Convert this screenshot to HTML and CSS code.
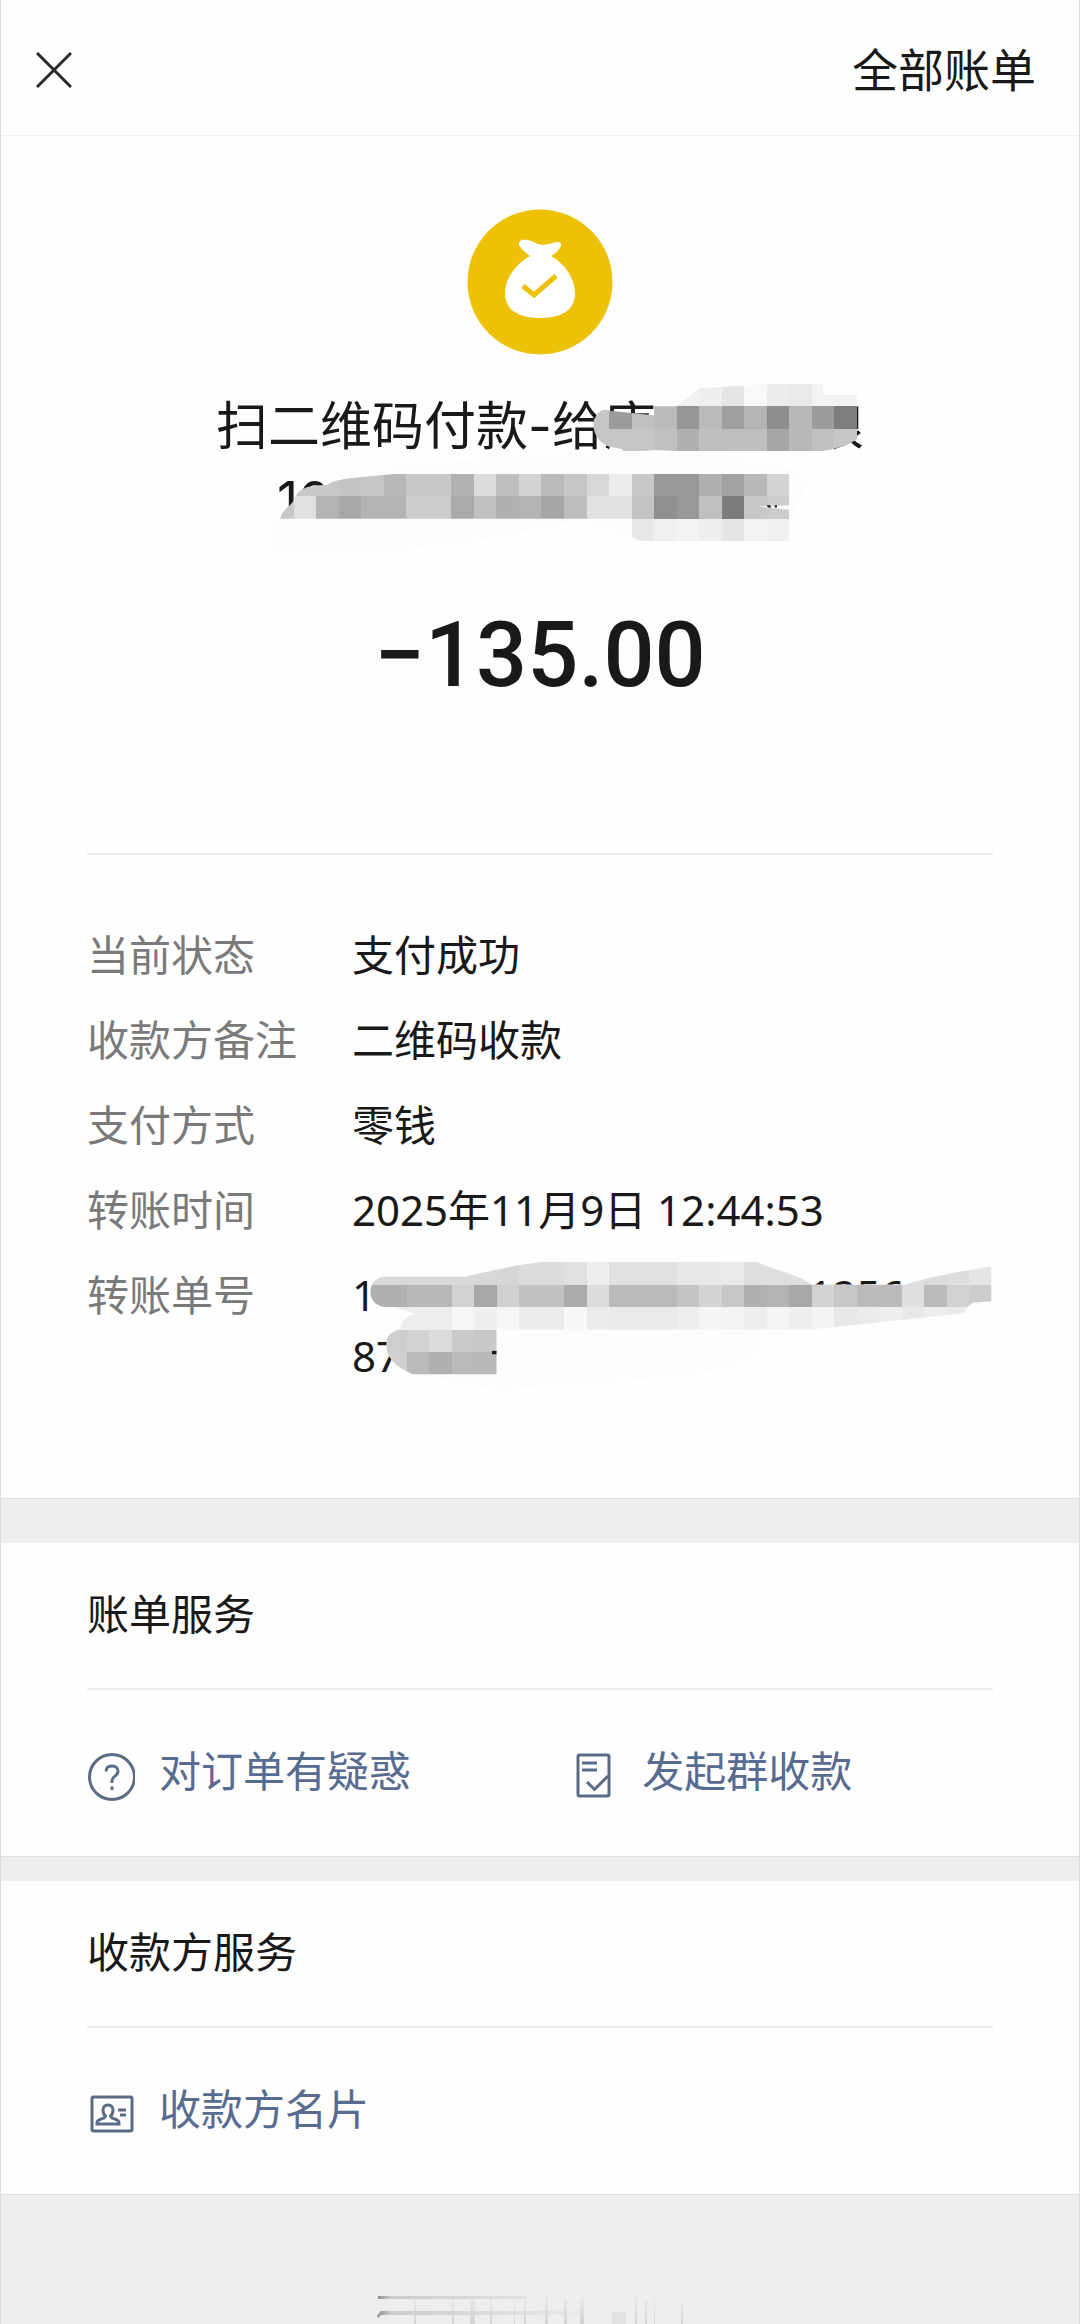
FILE: index.html
```html
<!DOCTYPE html>
<html lang="zh-CN">
<head>
  <meta charset="UTF-8">
  <meta name="viewport" content="width=device-width, initial-scale=1.0">
  <title>账单详情</title>
  <link rel="stylesheet" href="styles.css">
</head>
<body>
  <div class="page">
    <header class="topbar">
      <button class="close" type="button" aria-label="关闭">
        <svg viewBox="0 0 36 36" width="36" height="36"><path d="M1 1L35 35M35 1L1 35"/></svg>
      </button>
      <a class="all-bills" href="#">全部账单</a>
    </header>

    <main>
      <section class="panel bill">
        <svg class="logo" viewBox="0 0 146 146" width="146" height="146">
          <circle cx="73" cy="73" r="72.500" fill="#edc206"/>
          <path fill="#fff" d="M63 47C58 43 52 38 52 35C52 31 56 30 61 31C66 32 71 36 76 36C81 36 86 33 91 33C94 33 95 36 93 39C91 42 88 45 84 47C97 54 108 69 108 84C108 101 95 109 73 109C51 109 38 101 38 84C38 69 50 54 63 47Z"/>
          <path fill="none" stroke="#edc206" stroke-width="5" d="M56 77L67 86L89 67"/>
        </svg>

        <div class="masked">
          <h1 class="title">扫二维码付款-给康　　　娘<span class="title-number">10</span></h1>
          <svg class="mosaic mosaic-title" viewBox="0 0 28 9" width="631" height="203" aria-hidden="true">
            <defs>
              <clipPath id="titleShape">
                <path d="M17 2H18L19 1.2L24.5 .9V1.5H26.5V3C26.2 3.4 25.7 3.8 24.4 4H18.2L17 3.95L15.6 4.1V3.9L15 3.8C14.3 3.5 14.2 2.8 14.4 2.5C14.5 2.2 14.8 2.1 15 2.2L17 2.4Z"/>
                <path d="M.4 7C.5 6.6 .8 6.5 1 6.2C1.2 5.7 1.5 5.5 2.5 5.5C2.9 5.2 3.5 5.2 5.6 5H23V6.4L21.6 6.45L23 6.6V8H17C16.3 8 16 7.9 16 7.700V7Z"/>
              </clipPath>
            </defs>
            <path class="haze" d="M0 8.500V7.200L5 4.700L12 4.100H20L23.300 4.800L23.800 5.500L23 7L16 8L13.800 7.100L9 8L5 8.500Z"/>
            <g id="titleCells" clip-path="url(#titleShape)"></g>
            <path class="speck" d="M22 6.400H22.150L22.200 6.500H22.050ZM22.350 6.400H22.450V6.500H22.350Z"/>
          </svg>
        </div>

        <p class="amount">−135.00</p>

        <dl class="details">
          <dt>当前状态</dt>
          <dd>支付成功</dd>
          <dt>收款方备注</dt>
          <dd>二维码收款</dd>
          <dt>支付方式</dt>
          <dd>零钱</dd>
          <dt>转账时间</dt>
          <dd>2025年11月9日 12:44:53</dd>
          <dt>转账单号</dt>
          <dd class="masked">
            1&#8199;&#8199;&#8199;&#8199;&#8199;&#8199;&#8199;&#8199;&#8199;&#8199;&#8199;&#8199;&#8199;&#8199;&#8199;&#8199;&#8199;&#8199;1256&#8199;&#8199;7<br>87
            <svg class="mosaic mosaic-number" viewBox="0 0 28 6" width="631" height="135" aria-hidden="true">
              <defs>
                <clipPath id="numberShape">
                  <path d="M1 .65H4.6C5.7 .4 7 .1 8 0H17.6C18.5 .4 19.5 .6 20 1H24.2C25.4 .6 26.8 .4 28 .2V1.75L27.2 1.8C26.8 2 27 2.2 26.6 2.3L20 3H6V5H2.3C1.6 4.7 1.1 4.3 1.1 3.7C1.1 3.3 1.3 3.1 1.7 3C1.8 2.6 2 2.4 2.4 2.3L1.4 2H1C.5 1.9 .4 1.6 .4 1.3C.4 1 .6 .7 1 .65Z"/>
                </clipPath>
              </defs>
              <path class="haze" d="M2.300 5L6 5.700L13 5.200C16 4.900 17.600 4.400 17.700 3.800V3H2Z"/>
              <g id="numberCells" clip-path="url(#numberShape)"></g>
              <path class="speck" d="M5.800 3.950H6V4.100H5.800Z"/>
            </svg>
          </dd>
        </dl>
      </section>

      <section class="panel service">
        <h2>账单服务</h2>
        <nav class="links">
          <a href="#">
            <svg viewBox="0 0 48 48" width="48" height="48">
              <circle cx="25" cy="24" r="22.500"/>
              <path d="M19 18.500C19 15 21.400 13 25 13C28.600 13 31 15.200 31 18.200C31 20.800 29.400 22 27.600 23.400C25.800 24.800 25 25.800 25 28V30"/>
              <path d="M25 33.500V37"/>
            </svg>
            对订单有疑惑
          </a>
          <a href="#">
            <svg viewBox="0 0 48 48" width="48" height="48">
              <rect x="8" y="2" width="31" height="41" rx="1.500"/>
              <path d="M12 10H27M12 17H27M17 29L24.500 36.500L38 23"/>
            </svg>
            发起群收款
          </a>
        </nav>
      </section>

      <section class="panel service">
        <h2>收款方服务</h2>
        <nav class="links">
          <a href="#">
            <svg viewBox="0 0 48 48" width="48" height="48">
              <rect x="5" y="6" width="40" height="34" rx="1.500"/>
              <path d="M18.500 25C16.500 23.500 16 21 16 19C16 16 18 14 21 14C24 14 26 16 26 19C26 21 25.500 23.500 23.500 25C23.500 28 32 28 32 31.500V33H10V31.500C10 28 18.500 28 18.500 25Z"/>
              <path d="M31 19H39M33 24H39"/>
            </svg>
            收款方名片
          </a>
        </nav>
      </section>
    </main>

    <footer class="footer">
      <svg viewBox="0 0 326 34" width="326" height="34" aria-hidden="true">
        <defs>
          <linearGradient id="fade">
            <stop offset="0" stop-color="#8a8a8a"/>
            <stop offset=".06" stop-color="#ccc"/>
            <stop offset="1" stop-color="#eee"/>
          </linearGradient>
          <linearGradient id="drop" x1="0" y1="0" x2="0" y2="1">
            <stop offset="0" stop-color="#d4d4d4" stop-opacity="0"/>
            <stop offset="1" stop-color="#d4d4d4"/>
          </linearGradient>
        </defs>
        <path fill="url(#fade)" d="M1 6H150V9H1ZM4 21H220V25H4L1 28L0 26Z"/>
        <path fill="url(#drop)" d="M37 4H39V34H37ZM75 8H77V34H75ZM93 6H98V34H93ZM113 8H115V34H113ZM137 4H138V34H137ZM147 2H149V34H147ZM168 6H171V34H168ZM187 8H190V34H187ZM203 4H207V34H203ZM258 6H260V34H258ZM268 10H270V34H268ZM277 6H278V34H277ZM304 12H306V34H304Z"/>
        <path fill="#e2e2e2" d="M235 22H249V34H235Z"/>
      </svg>
    </footer>
  </div>

  <script>
    // each row: [y, first column, grey levels in hex]
    const titleCells = [
      [1, 18, "f1 ef e5 f9 ec e9 f3 f3"],
      [2, 14, "c6 9c c0 bb 96 bb a0 b5 8e b8 9c 7d"],
      [3, 14, "c5 c6 c6 c0 b0 bf bf bf a6 b8 c0 c6"],
      [5, 1, "c8 c8 c4 c6 b8 c8 c8 b2 dc bf d4 ba c6 d8 ec c8 98 98 b0 a2 b8 d4"],
      [6, 0, "c8 e0 b4 a8 b4 b4 cc cc aa c0 b0 b4 a6 bc e0 e0 c4 90 98 c0 7c c8 cc"],
      [7, 16, "e8 f0 f3 ee e6 f3 f1"]
    ];
    const numberCells = [
      [0, 0, "d8 d8 d9 d9 d9 d8 d6 dc dc e0 ee e0 e0 e0 e7 e7 e9 df df df df df df df df dc dd e5"],
      [1, 0, "b0 b0 b9 b9 d2 a8 d0 c2 c2 ab dc ba ba ba c4 d4 c8 b0 b4 a8 d3 c8 bb bb df bb d2 cd"],
      [2, 0, "ed ed ed ed f7 ef f6 eb eb f8 eb ea ea ea ef f5 f3 ee f5 ee f3 e8 eb ef e8 ee eb eb"],
      [3, 1, "ce d3 dc ca c8"],
      [4, 1, "d0 ba b0 ba b8"]
    ];

    function drawCells(id, rows) {
      const group = document.getElementById(id);
      rows.forEach(([y, start, shades]) => {
        shades.split(" ").forEach((shade, i) => {
          const cell = document.createElementNS("http://www.w3.org/2000/svg", "rect");
          cell.setAttribute("x", start + i);
          cell.setAttribute("y", y);
          cell.setAttribute("width", 1);
          cell.setAttribute("height", 1);
          cell.setAttribute("fill", "#" + shade.repeat(3));
          group.appendChild(cell);
        });
      });
    }

    drawCells("titleCells", titleCells);
    drawCells("numberCells", numberCells);
  </script>
</body>
</html>
```

FILE: styles.css
```css
:root {
  --ink: #191919;
  --muted: #7a7a7a;
  --link: #586b90;
  --icon: #5c6b85;
  --line: #ebebeb;
  --panel: #fefefe;
  --page: #eee;
}

* {
  box-sizing: border-box;
}

body {
  margin: 0;
  background: var(--page);
  color: var(--ink);
  font-family: "Noto Sans", "Noto Sans CJK SC", sans-serif;
  font-size: 42px;
  line-height: 61px;
}

h1, h2, p, dl, dd {
  margin: 0;
  font-weight: normal;
}

a {
  text-decoration: none;
}

svg {
  display: block;
  flex-shrink: 0;
}

.page {
  min-height: 100vh;
  border: solid #ddd;
  border-width: 0 1px;
}

.topbar {
  display: flex;
  align-items: center;
  justify-content: space-between;
  height: 136px;
  padding: 4px 43px 0 35px;
  background: var(--panel);
  border-bottom: 1px solid #f2f2f2;
}

.close {
  padding: 0;
  border: none;
  background: none;
  cursor: pointer;
}

.close path {
  stroke: #2a2a2a;
  stroke-width: 3;
}

.all-bills {
  color: var(--ink);
  font-size: 46px;
}

.panel {
  padding: 0 86px;
  background: var(--panel);
}

.bill {
  padding-top: 73px;
  padding-bottom: 112px;
  border-bottom: 1px solid #e2e2e2;
}

.logo {
  margin: 0 auto 35px;
}

.masked {
  position: relative;
}

.title {
  font-family: Inter, "Noto Sans CJK SC", sans-serif;
  font-size: 52px;
  line-height: 74px;
  text-align: center;
}

.title-number {
  display: block;
  width: 526px;
  margin: 0 auto;
  text-align: left;
}

/* pixelated cover over the private parts of the text */
.mosaic {
  position: absolute;
}

.mosaic g rect {
  shape-rendering: crispEdges;
}

.mosaic-title {
  top: -29px;
  left: 50%;
  margin-left: -269px;
}

.mosaic-number {
  top: -2px;
  left: 9px;
}

.haze {
  fill: #fcfcfc;
}

.speck {
  fill: var(--ink);
}

.amount {
  margin-top: 72px;
  font-family: Roboto, sans-serif;
  font-size: 90px;
  font-weight: 500;
  line-height: 92px;
  text-align: center;
}

.details {
  display: grid;
  grid-template-columns: 265px 1fr;
  row-gap: 24px;
  margin-top: 151px;
  padding-top: 69px;
  border-top: 2px solid var(--line);
}

.details dt {
  color: var(--muted);
}

.service {
  margin-top: 44px;
  border-bottom: 1px solid #e2e2e2;
}

.service + .service {
  margin-top: 24px;
}

.service h2 {
  padding: 40px 0 44px;
  border-bottom: 2px solid var(--line);
  font-size: 42px;
}

.links {
  display: grid;
  grid-template-columns: 8fr 7fr;
  padding: 50px 0 55px;
}

.links a {
  display: flex;
  align-items: flex-end;
  gap: 24px;
  color: var(--link);
}

.links svg {
  fill: none;
  stroke: var(--icon);
  stroke-width: 3;
}

.footer {
  display: flex;
  justify-content: center;
  padding-top: 95px;
}
```
